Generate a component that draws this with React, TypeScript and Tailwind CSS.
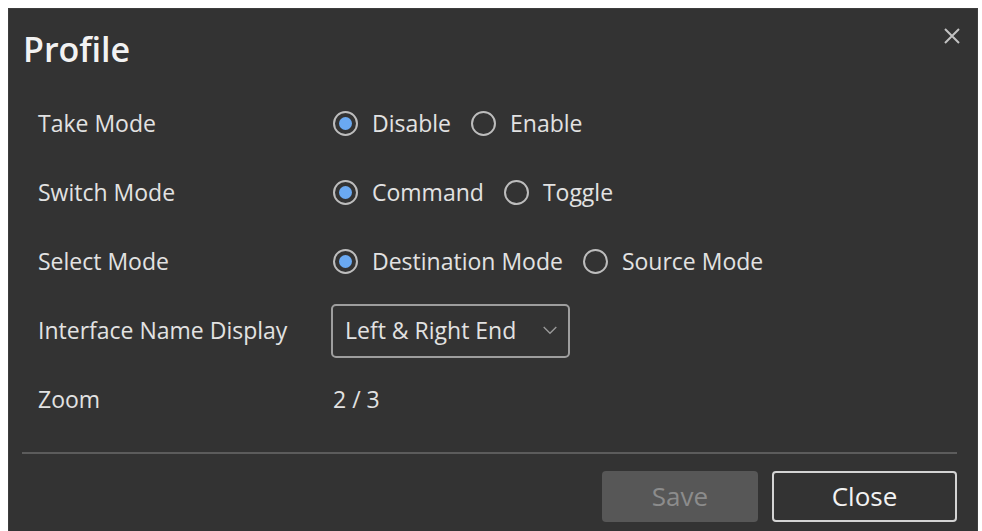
const Radio = ({ checked, label }: { checked?: boolean; label: string }) => {
  return (
    <label className="flex items-center gap-[14px]">
      <span className="flex h-[25px] w-[25px] items-center justify-center rounded-full border-2 border-[#bdbdbd]">
        {checked && <span className="h-[13px] w-[13px] rounded-full bg-[#6aa9f2]" />}
      </span>
      <span>{label}</span>
    </label>
  );
};

const Row = ({ label, children }: { label: string; children: React.ReactNode }) => {
  return (
    <div className="flex h-[69px] items-center">
      <div className="w-[324px] pl-[29px]">{label}</div>
      <div className="flex items-center gap-[20px]">{children}</div>
    </div>
  );
};

const App = () => {
  return (
    <div className="h-[531px] w-[982px] overflow-hidden bg-white pl-2 pt-2">
      <div
        className="relative h-[540px] w-[970px] border border-[#3e3e3e] bg-[#333333] text-[23px] text-[#e2e2e2]"
        style={{ fontFamily: '"Open Sans", "Noto Sans", sans-serif' }}
      >
        {/* close x */}
        <button className="absolute right-[15px] top-[17px] h-[20px] w-[20px] text-[#c2c2c2]">
          <svg viewBox="0 0 20 20" className="h-full w-full" fill="none" stroke="currentColor" strokeWidth="2">
            <path d="M3 3 L17 17 M17 3 L3 17" />
          </svg>
        </button>

        <h1 className="mt-[17px] pl-[14px] text-[34px] font-semibold leading-[46px] text-[#f2f2f2]">Profile</h1>

        <div className="mt-[17px]">
          <Row label="Take Mode">
            <Radio checked label="Disable" />
            <Radio label="Enable" />
          </Row>
          <Row label="Switch Mode">
            <Radio checked label="Command" />
            <Radio label="Toggle" />
          </Row>
          <Row label="Select Mode">
            <Radio checked label="Destination Mode" />
            <Radio label="Source Mode" />
          </Row>
          <Row label="Interface Name Display">
            <div className="-ml-[2px] flex h-[54px] w-[239px] items-center justify-between rounded-[5px] border-2 border-[#9e9e9e] pl-[12px] pr-[10px]">
              <span>Left &amp; Right End</span>
              <svg viewBox="0 0 16 10" className="h-[9px] w-[16px]" fill="none" stroke="#9a9a9a" strokeWidth="1.5">
                <path d="M1 1 L8 8 L15 1" />
              </svg>
            </div>
          </Row>
          <Row label="Zoom">
            <span>2 / 3</span>
          </Row>
        </div>

        <div className="ml-[13px] mr-[20px] mt-[18px] h-[2px] bg-[#5c5c5c]" />

        <div className="mr-[20px] mt-[17px] flex justify-end gap-[14px] text-[26px]">
          <button className="h-[51px] w-[156px] rounded-[4px] bg-[#575757] text-[#8c8c8c]">Save</button>
          <button className="h-[51px] w-[185px] rounded-[4px] border-2 border-[#d4d4d4] text-[#f2f2f2]">Close</button>
        </div>
      </div>
    </div>
  );
};

export default App;
